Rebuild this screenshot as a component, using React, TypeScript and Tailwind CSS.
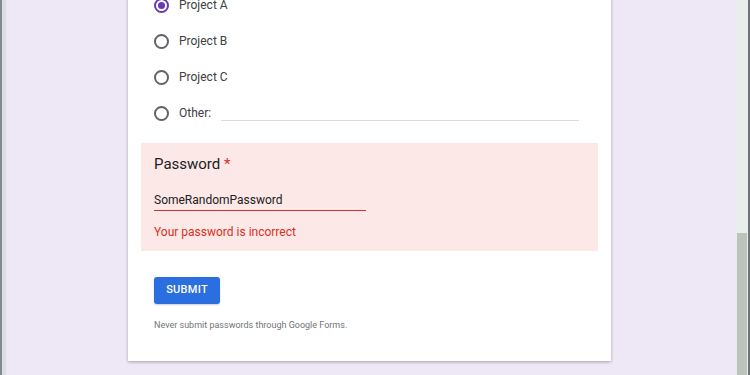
import React from "react";

const options = ["Project A", "Project B", "Project C"];

function Radio({ checked }: { checked?: boolean }) {
  return (
    <span
      className={
        "flex h-[15px] w-[15px] items-center justify-center rounded-full border-[2px] " +
        (checked ? "border-[#673ab7]" : "border-[#5f6368]")
      }
    >
      {checked && <span className="h-[7px] w-[7px] rounded-full bg-[#673ab7]" />}
    </span>
  );
}

export default function App() {
  return (
    <div
      className="flex h-screen w-screen overflow-hidden bg-[#ede7f6]"
      style={{ fontFamily: "Roboto, 'Liberation Sans', sans-serif" }}
    >
      <div className="w-[2px] bg-[#858a8e]" />
      <div className="w-[4px] bg-[#dcdfe6]" />

      <main className="flex flex-1 justify-center">
        <div className="-mt-[13px] mr-[3px] h-[374px] w-[483px] self-start bg-white shadow-[0_1px_3px_rgba(0,0,0,0.3)]">
          <div className="px-[26px]">
            {options.map((o, i) => (
              <div key={o} className="flex h-[36px] items-center gap-[10px]">
                <Radio checked={i === 0} />
                <span className="text-[12px] text-[#3c4043]">{o}</span>
              </div>
            ))}
            <div className="flex h-[36px] items-center gap-[10px]">
              <Radio />
              <span className="text-[12px] text-[#3c4043]">Other:</span>
              <div className="mr-[6px] mt-[14px] flex-1 border-b border-[#dadce0]" />
            </div>
          </div>

          <section className="mx-[13px] mt-[12px] h-[108px] bg-[#fce8e6] px-[13px] pt-[12px]">
            <h2 className="text-[15px] leading-[18px] text-[#202124]">
              Password <span className="text-[#d93025]">*</span>
            </h2>
            <div className="mt-[19px] w-[212px] border-b border-[#d93025] pb-[2px] text-[12px] leading-[16px] text-[#202124]">
              SomeRandomPassword
            </div>
            <p className="mt-[13px] text-[12px] leading-[16px] text-[#d93025]">
              Your password is incorrect
            </p>
          </section>

          <div className="px-[26px] pt-[25px]">
            <button className="h-[27px] w-[66px] rounded-[3px] bg-[#2a6ee0] text-[11px] font-medium tracking-wide text-white shadow-[0_1px_2px_rgba(0,0,0,0.2)]">
              SUBMIT
            </button>
            <p className="mt-[15px] text-[9px] text-[#70757a]">
              Never submit passwords through Google Forms.
            </p>
          </div>
        </div>
      </main>

      <div className="flex w-[12px] flex-col bg-[#e9edeb]">
        <div className="h-[233px]" />
        <div className="mx-[1px] flex-1 bg-[#bcc3bd]" />
      </div>
      <div className="w-[2px] bg-[#6f7377]" />
    </div>
  );
}
